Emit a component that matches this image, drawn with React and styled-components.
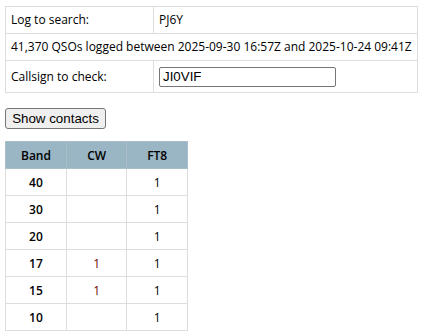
import React from "react";
import styled, { createGlobalStyle } from "styled-components";

const Global = createGlobalStyle`
  body { margin: 0; background: #fff; font-family: "Open Sans", "Noto Sans", sans-serif; font-size: 12px; color: #000; }
`;

const Page = styled.div`
  padding: 6px 5px;
  display: flex;
  flex-direction: column;
  align-items: flex-start;
`;

const InfoTable = styled.table`
  border-collapse: collapse;
  width: 412px;
  td {
    border: 1px solid #ddd;
    padding: 0 5px;
    height: 27px;
    line-height: 16px;
    white-space: nowrap;
    box-sizing: border-box;
  }
`;

const LabelCell = styled.td`
  width: 148px;
`;

const InputCell = styled.td`
  && { padding: 5px 5px; height: 32px; }
`;

const CallInput = styled.input`
  display: block;
  box-sizing: border-box;
  width: 177px;
  height: 20px;
  border: 1px solid #767676;
  border-radius: 2px;
  padding: 1px 3px;
  font-family: "Liberation Sans", Arial, sans-serif;
  font-size: 13.33px;
  margin: 0;
  outline: none;
`;

const Button = styled.button`
  margin-top: 15px;
  box-sizing: border-box;
  height: 21px;
  width: 101px;
  padding: 1px 6px;
  font-family: "Liberation Sans", Arial, sans-serif;
  font-size: 13.33px;
  background: #efefef;
  border: 1px solid #767676;
  border-radius: 3px;
  color: #000;
`;

const BandTable = styled.table`
  margin-top: 12px;
  border-collapse: collapse;
  width: 183px;
  th, td {
    border: 1px solid #ddd;
    text-align: center;
    height: 26px;
    padding: 0;
    width: 61px;
  }
  th {
    background: #9ab5c3;
    border-color: #a9bec9;
    font-weight: 600;
  }
`;

const BandCell = styled.td`
  font-weight: 600;
`;

const Count = styled.td`
  color: ${(p) => (p.$cw ? "#700000" : "#000")};
`;

const rows = [
  ["40", "", "1"],
  ["30", "", "1"],
  ["20", "", "1"],
  ["17", "1", "1"],
  ["15", "1", "1"],
  ["10", "", "1"],
];

export default function App() {
  return (
    <>
      <Global />
      <Page>
        <InfoTable>
          <tbody>
            <tr>
              <LabelCell>Log to search:</LabelCell>
              <td>PJ6Y</td>
            </tr>
            <tr>
              <td colSpan={2}>41,370 QSOs logged between 2025-09-30 16:57Z and 2025-10-24 09:41Z</td>
            </tr>
            <tr>
              <LabelCell>Callsign to check:</LabelCell>
              <InputCell>
                <CallInput defaultValue="JI0VIF" />
              </InputCell>
            </tr>
          </tbody>
        </InfoTable>
        <Button>Show contacts</Button>
        <BandTable>
          <thead>
            <tr>
              <th>Band</th>
              <th>CW</th>
              <th>FT8</th>
            </tr>
          </thead>
          <tbody>
            {rows.map(([b, cw, ft]) => (
              <tr key={b}>
                <BandCell>{b}</BandCell>
                <Count $cw>{cw}</Count>
                <Count>{ft}</Count>
              </tr>
            ))}
          </tbody>
        </BandTable>
      </Page>
    </>
  );
}
